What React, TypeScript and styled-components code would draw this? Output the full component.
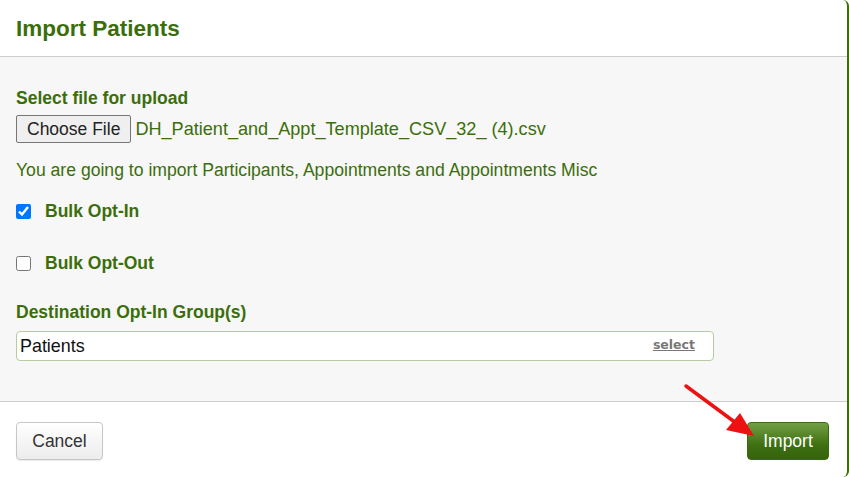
import styled, { createGlobalStyle } from 'styled-components'

const GREEN = '#3b6e0b'

const GlobalStyle = createGlobalStyle`
  html, body {
    margin: 0;
    padding: 0;
    background: #ffffff;
  }
  body {
    font-family: "Liberation Sans", Arial, sans-serif;
  }
`

const Modal = styled.div`
  width: 849px;
  height: 477px;
  box-sizing: border-box;
  display: flex;
  flex-direction: column;
  background: #ffffff;
  border-right: 2px solid ${GREEN};
  border-top-right-radius: 6px;
  border-bottom-right-radius: 6px;
  overflow: hidden;
  position: relative;
`

const Header = styled.div`
  height: 56px;
  flex: 0 0 auto;
  display: flex;
  align-items: center;
  padding: 0 16px;
  border-bottom: 1px solid #cccccc;
`

const Title = styled.h1`
  margin: 0;
  font-size: 22.5px;
  font-weight: 700;
  color: ${GREEN};
  padding-top: 1px;
`

const Body = styled.div`
  flex: 0 0 auto;
  height: 345px;
  box-sizing: border-box;
  background: #f7f7f7;
  border-bottom: 1px solid #cccccc;
  padding: 31px 16px 0;
  display: flex;
  flex-direction: column;
`

const FieldLabel = styled.div`
  font-size: 17.5px;
  font-weight: 700;
  color: ${GREEN};
  line-height: 20px;
`

const FileRow = styled.div`
  display: flex;
  align-items: center;
  gap: 4px;
  margin-top: 7px;
`

const FileButton = styled.button`
  height: 28px;
  padding: 0 10px;
  font-family: "Liberation Sans", Arial, sans-serif;
  font-size: 17.5px;
  color: #222222;
  background: #efefef;
  border: 1px solid #767676;
  border-radius: 2px;
`

const FileName = styled.span`
  font-size: 18.1px;
  color: ${GREEN};
`

const Notice = styled.p`
  margin: 17px 0 0;
  font-size: 17.6px;
  color: ${GREEN};
  line-height: 20px;
`

const CheckRow = styled.label<{ $gap: number }>`
  display: flex;
  align-items: center;
  gap: 14px;
  margin-top: ${({ $gap }) => $gap}px;
  font-size: 17.5px;
  font-weight: 700;
  color: ${GREEN};
  line-height: 20px;
`

const Check = styled.input`
  width: 15px;
  height: 15px;
  margin: 0;
  accent-color: #0075ff;
`

const GroupLabel = styled(FieldLabel)`
  margin-top: 29px;
`

const GroupInput = styled.div`
  margin-top: 9px;
  width: 698px;
  height: 30px;
  box-sizing: border-box;
  display: flex;
  align-items: center;
  justify-content: space-between;
  padding: 0 18px 0 3px;
  background: #ffffff;
  border: 1px solid #b6cc9f;
  border-radius: 4px;
`

const GroupValue = styled.span`
  font-size: 17.9px;
  color: #111111;
`

const SelectLink = styled.a`
  font-family: "DejaVu Sans", Verdana, sans-serif;
  font-size: 12.5px;
  font-weight: 700;
  color: #777777;
  text-decoration: underline;
  cursor: pointer;
  margin-top: -3px;
`

const Footer = styled.div`
  flex: 1 1 auto;
  display: flex;
  align-items: flex-start;
  justify-content: space-between;
  padding: 20px 18px 0 16px;
`

const CancelButton = styled.button`
  width: 87px;
  height: 38px;
  font-family: "Liberation Sans", Arial, sans-serif;
  font-size: 17.5px;
  color: #333333;
  background: linear-gradient(#ffffff, #ececec);
  border: 1px solid #c6c6c6;
  border-radius: 4px;
  box-shadow: 0 1px 1px rgba(0, 0, 0, 0.08);
`

const ImportButton = styled.button`
  width: 82px;
  height: 38px;
  font-family: "Liberation Sans", Arial, sans-serif;
  font-size: 17.5px;
  color: #ffffff;
  background: linear-gradient(#72a044, #3f7012 60%, #35630c);
  border: 1px solid #3a6a10;
  border-radius: 4px;
`

const Arrow = styled.svg`
  position: absolute;
  left: 680px;
  top: 380px;
  pointer-events: none;
`

export default function App() {
  return (
    <>
      <GlobalStyle />
      <Modal>
        <Header>
          <Title>Import Patients</Title>
        </Header>
        <Body>
          <FieldLabel>Select file for upload</FieldLabel>
          <FileRow>
            <FileButton type="button">Choose File</FileButton>
            <FileName>DH_Patient_and_Appt_Template_CSV_32_ (4).csv</FileName>
          </FileRow>
          <Notice>You are going to import Participants, Appointments and Appointments Misc</Notice>
          <CheckRow $gap={21}>
            <Check type="checkbox" defaultChecked />
            Bulk Opt-In
          </CheckRow>
          <CheckRow $gap={32}>
            <Check type="checkbox" />
            Bulk Opt-Out
          </CheckRow>
          <GroupLabel>Destination Opt-In Group(s)</GroupLabel>
          <GroupInput>
            <GroupValue>Patients</GroupValue>
            <SelectLink>select</SelectLink>
          </GroupInput>
        </Body>
        <Footer>
          <CancelButton type="button">Cancel</CancelButton>
          <ImportButton type="button">Import</ImportButton>
        </Footer>
        <Arrow width="80" height="62" viewBox="0 0 80 62">
          <line x1="6" y1="6" x2="56" y2="43" stroke="#ee1111" strokeWidth="3.5" strokeLinecap="round" />
          <polygon points="74,56 46,50 60,33" fill="#ee1111" />
        </Arrow>
      </Modal>
    </>
  )
}
